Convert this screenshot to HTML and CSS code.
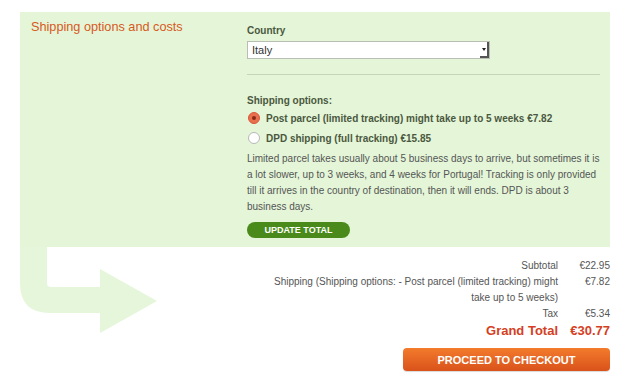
FILE: index.html
```html
<!DOCTYPE html>
<html>
<head>
<meta charset="utf-8">
<link rel="stylesheet" href="styles.css">
</head>
<body>
<div class="panel">
  <div class="side">
    <h2 class="title">Shipping options and costs</h2>
  </div>
  <div class="main">
    <label class="label">Country</label>
    <div class="select">
      <span class="sel-text">Italy</span>
      <span class="sel-btn"><span class="tri"></span></span>
    </div>
    <hr class="divider">
    <div class="label opts">Shipping options:</div>
    <div class="option"><span class="radio checked"></span><span>Post parcel (limited tracking) might take up to 5 weeks €7.82</span></div>
    <div class="option"><span class="radio"></span><span>DPD shipping (full tracking) €15.85</span></div>
    <p class="note">Limited parcel takes usually about 5 business days to arrive, but sometimes it is a lot slower, up to 3 weeks, and 4 weeks for Portugal! Tracking is only provided till it arrives in the country of destination, then it will ends. DPD is about 3 business days.</p>
    <button class="update">UPDATE TOTAL</button>
  </div>
</div>
<div class="lower">
  <svg class="arrow" width="160" height="90" viewBox="0 0 160 90">
    <path d="M20 0 H47 V36 Q47 40 51 40 H100 V22 L157 54 L100 86 V66 H50 Q20 66 20 36 Z" fill="#e5f6da"/>
  </svg>
  <div class="totals">
    <table>
      <tr><td class="lbl">Subtotal</td><td class="val">€22.95</td></tr>
      <tr><td class="lbl">Shipping (Shipping options: - Post parcel (limited tracking) might take up to 5 weeks)</td><td class="val">€7.82</td></tr>
      <tr><td class="lbl">Tax</td><td class="val">€5.34</td></tr>
      <tr class="grand"><td class="lbl">Grand Total</td><td class="val">€30.77</td></tr>
    </table>
    <button class="checkout">PROCEED TO CHECKOUT</button>
  </div>
</div>
</body>
</html>
```
FILE: styles.css
```css
* { box-sizing: border-box; }
body {
  margin: 0;
  background: #fff;
  font-family: "Liberation Sans", Arial, sans-serif;
  color: #555;
  width: 620px;
  height: 388px;
  overflow: hidden;
}
.panel {
  margin: 12px 0 0 20px;
  width: 590px;
  height: 235px;
  background: #e4f5d8;
  display: flex;
}
.side {
  width: 227px;
  padding: 7px 0 0 11px;
}
.title {
  margin: 0;
  font-size: 12.7px;
  font-weight: normal;
  line-height: 16px;
  color: #d8591c;
}
.main {
  width: 353px;
  padding-top: 12px;
}
.label {
  display: block;
  font-size: 10px;
  font-weight: bold;
  line-height: 14px;
  color: #4b5840;
}
.select {
  margin-top: 3px;
  width: 243px;
  height: 18px;
  background: #fff;
  border: 1px solid #b9bdb4;
  display: flex;
  align-items: center;
  justify-content: space-between;
}
.sel-text {
  font-size: 11px;
  color: #333;
  padding-left: 4px;
}
.sel-btn {
  width: 9px;
  height: 16px;
  border-right: 2px solid #555;
  border-bottom: 2px solid #555;
  display: flex;
  align-items: center;
  justify-content: center;
}
.tri {
  width: 0;
  height: 0;
  border-left: 2.5px solid transparent;
  border-right: 2.5px solid transparent;
  border-top: 3px solid #222;
}
.divider {
  margin: 15px 0 0 0;
  border: 0;
  border-top: 1px solid #c5d6b6;
  width: 353px;
}
.opts { margin-top: 19px; }
.option {
  display: flex;
  align-items: center;
  gap: 6px;
  height: 20px;
  font-size: 10px;
  font-weight: bold;
  color: #4b5840;
}
.option:first-of-type { margin-top: 5px; }
.radio {
  width: 12px;
  height: 12px;
  border-radius: 50%;
  border: 1px solid #b8b8b8;
  background: #fff;
  margin-left: 1px;
  position: relative;
}
.radio.checked {
  background: #e8704e;
  border-color: #d9573a;
}
.radio.checked::after {
  content: "";
  position: absolute;
  left: 3px; top: 3px;
  width: 4px; height: 4px;
  border-radius: 50%;
  background: #8a2a16;
}
.note {
  margin: 3px 0 0 0;
  font-size: 10px;
  line-height: 16px;
  color: #555;
}
.update {
  margin-top: 7px;
  width: 103px;
  height: 16px;
  border: 0;
  border-radius: 8px;
  background: #4a8a1b;
  color: #fff;
  font-family: "Liberation Sans", Arial, sans-serif;
  font-size: 9px;
  font-weight: bold;
  padding: 0;
  line-height: 16px;
}
.lower {
  display: flex;
  justify-content: space-between;
  width: 620px;
}
.arrow { display: block; flex: none; }
.totals {
  width: 360px;
  padding-right: 10px;
  display: flex;
  flex-direction: column;
  align-items: flex-end;
}
.totals table {
  border-collapse: collapse;
  margin-top: 11px;
}
.totals td {
  font-size: 10px;
  line-height: 16px;
  color: #555;
  padding: 0;
  text-align: right;
  vertical-align: top;
}
.totals td.lbl { width: 302px; padding-right: 12px; }
.totals td.val { width: 40px; }
.totals .grand td {
  font-size: 13px;
  font-weight: bold;
  color: #d4401f;
  line-height: 18px;
}
.checkout {
  margin-top: 8px;
  width: 207px;
  height: 23px;
  border: 0;
  border-radius: 4px;
  background: linear-gradient(#f37b2c, #d9521a);
  color: #fff;
  font-family: "Liberation Sans", Arial, sans-serif;
  font-size: 11px;
  font-weight: bold;
  padding: 0;
  box-shadow: 0 1px 1px rgba(0,0,0,0.15);
}
```
